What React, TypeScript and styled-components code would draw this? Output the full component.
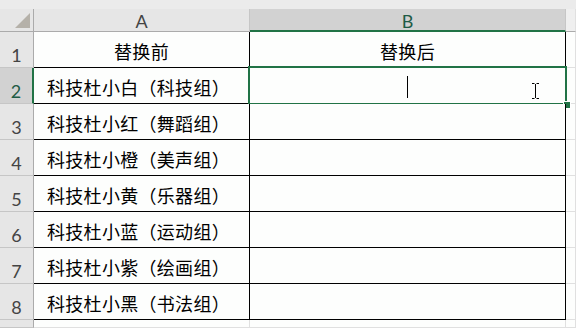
import styled, { createGlobalStyle } from 'styled-components';

const GlobalStyle = createGlobalStyle`
  html, body {
    margin: 0;
    padding: 0;
    background: #ffffff;
  }
  body {
    font-family: "Noto Sans CJK SC", "Noto Sans", sans-serif;
  }
`;

const rows = [
  '科技杜小白（科技组）',
  '科技杜小红（舞蹈组）',
  '科技杜小橙（美声组）',
  '科技杜小黄（乐器组）',
  '科技杜小蓝（运动组）',
  '科技杜小紫（绘画组）',
  '科技杜小黑（书法组）',
];

const green = '#217346';

const Sheet = styled.div`
  width: 576px;
  height: 328px;
  overflow: hidden;
  display: flex;
  flex-direction: column;
  background: #ffffff;
`;

const TopStrip = styled.div`
  height: 9px;
  flex: none;
  background: #ebebeb;
`;

const Grid = styled.div`
  flex: 1;
  display: grid;
  grid-template-columns: 34px 216px 316px 1fr;
  grid-template-rows: 23px repeat(8, 36px) 1fr;
`;

const Corner = styled.div`
  background: #e6e6e6;
  border-right: 1px solid #ababab;
  border-bottom: 1px solid #ababab;
  box-sizing: border-box;
  display: flex;
  align-items: flex-end;
  justify-content: flex-end;
  padding: 0 3px 3px 0;
`;

const ColHeader = styled.div<{ $active?: boolean; $faded?: boolean }>`
  box-sizing: border-box;
  display: flex;
  align-items: center;
  justify-content: center;
  font-family: Lato, "Open Sans", sans-serif;
  font-size: 18px;
  color: ${(p) => (p.$active ? '#1f5c46' : '#444444')};
  background: ${(p) => (p.$active ? '#d2d2d2' : p.$faded ? '#efefef' : '#e6e6e6')};
  border-right: 1px solid ${(p) => (p.$faded ? '#e0e0e0' : '#c6c6c6')};
  border-bottom: ${(p) => (p.$active ? `2px solid ${green}` : '1px solid #ababab')};
  padding-top: ${(p) => (p.$active ? '2px' : '1px')};
`;

const RowHeader = styled.div<{ $active?: boolean }>`
  box-sizing: border-box;
  display: flex;
  align-items: flex-end;
  justify-content: center;
  padding-bottom: 1px;
  font-family: Lato, "Open Sans", sans-serif;
  font-size: 18px;
  color: ${(p) => (p.$active ? '#1f5c46' : '#444444')};
  background: ${(p) => (p.$active ? '#d2d2d2' : '#e6e6e6')};
  border-bottom: 1px solid #c6c6c6;
  border-right: ${(p) => (p.$active ? `2px solid ${green}` : '1px solid #ababab')};
`;

const Cell = styled.div<{ $center?: boolean }>`
  position: relative;
  box-sizing: border-box;
  display: flex;
  align-items: center;
  justify-content: ${(p) => (p.$center ? 'center' : 'flex-start')};
  padding: 3px 0 0 ${(p) => (p.$center ? '0' : '13px')};
  font-size: 18px;
  line-height: 1;
  letter-spacing: 0.3px;
  color: #000000;
  background: #fdfefd;
  border-right: 1px solid #000000;
  border-bottom: 1px solid #000000;
`;

const EmptyCell = styled.div`
  box-sizing: border-box;
  background: #fdfefd;
  border-right: 1px solid #e0e0e0;
  border-bottom: 1px solid #e0e0e0;
`;

const Selection = styled.div`
  position: absolute;
  left: -2px;
  top: -2px;
  right: -2px;
  bottom: -2px;
  border: 2px solid ${green};
  pointer-events: none;
`;

const FillHandle = styled.div`
  position: absolute;
  right: -5px;
  bottom: -5px;
  width: 6px;
  height: 6px;
  background: ${green};
  outline: 1px solid #ffffff;
`;

const Caret = styled.div`
  position: absolute;
  left: 157px;
  top: 8px;
  width: 1px;
  height: 22px;
  background: #000000;
`;

const IBeam = styled.svg`
  position: absolute;
  left: 281px;
  top: 15px;
`;

function CornerTriangle() {
  return (
    <svg width="15" height="15" viewBox="0 0 15 15">
      <polygon points="15,0 15,15 0,15" fill="#b5b1a9" />
    </svg>
  );
}

export default function App() {
  return (
    <>
      <GlobalStyle />
      <Sheet>
        <TopStrip />
        <Grid>
          <Corner>
            <CornerTriangle />
          </Corner>
          <ColHeader>A</ColHeader>
          <ColHeader $active>B</ColHeader>
          <ColHeader $faded />

          <RowHeader>1</RowHeader>
          <Cell $center>替换前</Cell>
          <Cell $center>替换后</Cell>
          <EmptyCell />

          {rows.map((text, i) => (
            <Row key={text} index={i + 2} text={text} />
          ))}

          <RowHeader />
          <EmptyCell />
          <EmptyCell />
          <EmptyCell />
        </Grid>
      </Sheet>
    </>
  );
}

function Row({ index, text }: { index: number; text: string }) {
  const active = index === 2;
  return (
    <>
      <RowHeader $active={active}>{index}</RowHeader>
      <Cell>{text}</Cell>
      <Cell>
        {active && (
          <>
            <Selection>
              <FillHandle />
            </Selection>
            <Caret />
            <IBeam width="9" height="16" viewBox="0 0 9 16">
              <path d="M1 0.5h2.5M5.5 0.5H8M4.5 1v14M1 15.5h2.5M5.5 15.5H8" stroke="#000" strokeWidth="1" fill="none" />
            </IBeam>
          </>
        )}
      </Cell>
      <EmptyCell />
    </>
  );
}
